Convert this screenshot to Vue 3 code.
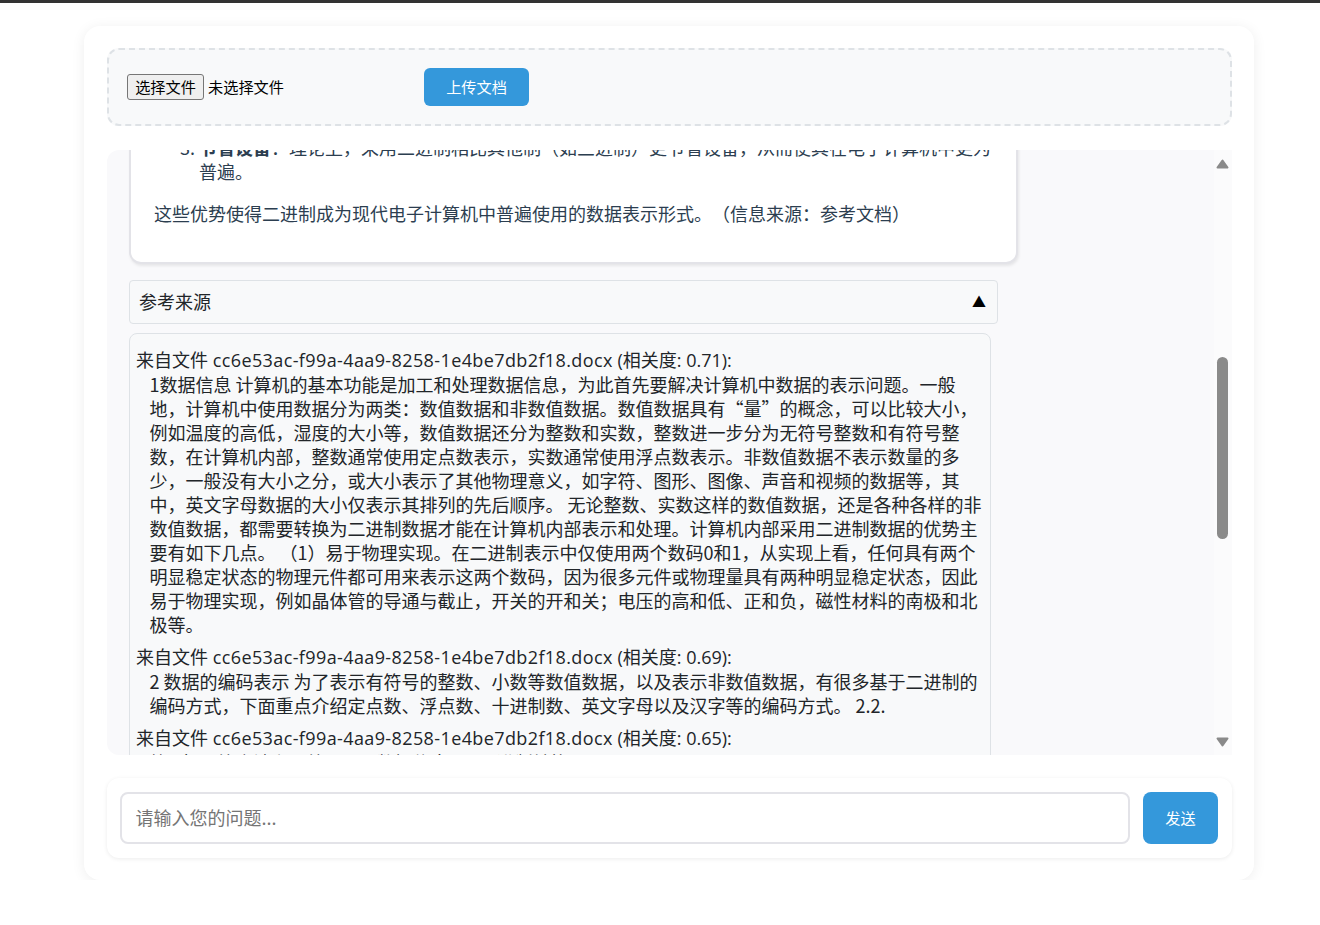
<template>
  <div class="top-bar"></div>
  <div class="page">
    <div class="container">
      <section class="upload-box">
        <div class="file-input">
          <button class="file-btn" type="button">选择文件</button>
          <span class="file-name">未选择文件</span>
        </div>
        <button class="upload-btn" type="button">上传文档</button>
      </section>

      <section class="chat-box">
        <div class="messages">
          <div class="answer">
            <ol start="3">
              <li><strong>节省设备</strong>：理论上，采用二进制相比其他制（如三进制）更节省设备，从而使其在电子计算机中更为普遍。</li>
            </ol>
            <p>这些优势使得二进制成为现代电子计算机中普遍使用的数据表示形式。（信息来源：参考文档）</p>
          </div>

          <div class="sources-toggle">
            <span>参考来源</span>
            <span class="caret">▲</span>
          </div>

          <div class="sources">
            <div v-for="(s, i) in sources" :key="i" class="source">
              <div class="source-title">来自文件 <span class="file-id">{{ s.file }}</span> (相关度: {{ s.score }}):</div>
              <div class="source-body">{{ s.text }}</div>
            </div>
          </div>
        </div>

        <div class="scrollbar">
          <svg class="arrow up" width="13" height="10" viewBox="0 0 13 10">
            <path d="M6.5 1.5 L11.5 8.5 H1.5 Z" fill="#8a8a8a" stroke="#8a8a8a" stroke-width="2" stroke-linejoin="round" />
          </svg>
          <div class="track"><div class="thumb"></div></div>
          <svg class="arrow down" width="13" height="10" viewBox="0 0 13 10">
            <path d="M1.5 1.5 H11.5 L6.5 8.5 Z" fill="#8a8a8a" stroke="#8a8a8a" stroke-width="2" stroke-linejoin="round" />
          </svg>
        </div>
      </section>

      <section class="input-box">
        <input class="question" type="text" placeholder="请输入您的问题..." />
        <button class="send-btn" type="button">发送</button>
      </section>
    </div>
  </div>
</template>

<script setup>
const file = 'cc6e53ac-f99a-4aa9-8258-1e4be7db2f18.docx'

const sources = [
  {
    file,
    score: '0.71',
    text: '1数据信息 计算机的基本功能是加工和处理数据信息，为此首先要解决计算机中数据的表示问题。一般地，计算机中使用数据分为两类：数值数据和非数值数据。数值数据具有“量”的概念，可以比较大小，例如温度的高低，湿度的大小等，数值数据还分为整数和实数，整数进一步分为无符号整数和有符号整数，在计算机内部，整数通常使用定点数表示，实数通常使用浮点数表示。非数值数据不表示数量的多少，一般没有大小之分，或大小表示了其他物理意义，如字符、图形、图像、声音和视频的数据等，其中，英文字母数据的大小仅表示其排列的先后顺序。 无论整数、实数这样的数值数据，还是各种各样的非数值数据，都需要转换为二进制数据才能在计算机内部表示和处理。计算机内部采用二进制数据的优势主要有如下几点。 （1）易于物理实现。在二进制表示中仅使用两个数码0和1，从实现上看，任何具有两个明显稳定状态的物理元件都可用来表示这两个数码，因为很多元件或物理量具有两种明显稳定状态，因此易于物理实现，例如晶体管的导通与截止，开关的开和关；电压的高和低、正和负，磁性材料的南极和北极等。'
  },
  {
    file,
    score: '0.69',
    text: '2 数据的编码表示 为了表示有符号的整数、小数等数值数据，以及表示非数值数据，有很多基于二进制的编码方式，下面重点介绍定点数、浮点数、十进制数、英文字母以及汉字等的编码方式。 2.2.'
  },
  {
    file,
    score: '0.65',
    text: '第2章 运算方法和运算器 2.1 数据信息 2.1.1 进制转换 2.2.1'
  }
]
</script>

<style>
body {
  background: #fff;
}
</style>

<style scoped>
.top-bar {
  height: 3px;
  background: #333;
}

.page {
  width: 1170px;
  margin: 23px 0 0 84px;
  font-family: "Noto Sans CJK SC", "Noto Sans", sans-serif;
  text-spacing-trim: space-all;
}

.container {
  background: #fff;
  border-radius: 16px;
  box-shadow: 0 2px 14px rgba(0, 0, 0, 0.07);
  padding: 22px 22px 22px 23px;
  height: 854px;
  box-sizing: border-box;
}

.upload-box {
  display: flex;
  align-items: center;
  gap: 20px;
  height: 78px;
  box-sizing: border-box;
  padding: 0 18px;
  background: #f8f9fa;
  border: 2px dashed #dee2e6;
  border-radius: 12px;
}

.file-input {
  display: flex;
  align-items: center;
  gap: 4px;
  width: 277px;
  font-size: 15.2px;
  color: #000;
}

.file-btn {
  width: 77px;
  height: 26px;
  padding: 0 0 2px;
  font: inherit;
  color: #000;
  background: #efefef;
  border: 1px solid #767676;
  border-radius: 3px;
}

.file-name {
  margin-bottom: 2px;
}

.upload-btn {
  width: 105px;
  height: 38px;
  padding: 0 0 2px;
  font: inherit;
  font-size: 15.2px;
  color: #fff;
  background: #3498db;
  border: none;
  border-radius: 6px;
}

.chat-box {
  display: flex;
  height: 605px;
  margin-top: 24px;
  background: #f9f9fb;
  border-radius: 12px 0 0 12px;
  overflow: hidden;
}

.messages {
  flex: 1;
  min-width: 0;
  overflow: hidden;
  padding-left: 22px;
}

.answer {
  width: 889px;
  box-sizing: border-box;
  margin-top: -15px;
  padding: 0 22px 13px 23px;
  background: #fff;
  border: 2px solid #e3e3e8;
  border-top: none;
  border-radius: 0 0 12px 12px;
  box-shadow: 1px 2px 3px rgba(0, 0, 0, 0.08);
  font-size: 18px;
  line-height: 24px;
  color: #2c3e50;
}

.answer ol {
  margin: 0;
  padding-left: 45px;
}

.answer p {
  margin: 18px 0 24px;
}

.sources-toggle {
  display: flex;
  justify-content: space-between;
  align-items: center;
  width: 869px;
  height: 44px;
  box-sizing: border-box;
  margin-top: 16px;
  padding: 0 11px 2px 9px;
  font-size: 18px;
  color: #212529;
  background: #f8f9fa;
  border: 1px solid #dee2e6;
  border-radius: 4px;
}

.caret {
  font-size: 14px;
  color: #000;
}

.sources {
  width: 862px;
  box-sizing: border-box;
  margin-top: 9px;
  padding: 14px 6px 0;
  font-size: 18px;
  line-height: 24px;
  color: #212529;
  background: #f8f9fa;
  border: 1px solid #dee2e6;
  border-radius: 8px;
}

.source {
  margin-bottom: 9px;
}

.source-title {
  font-family: "Open Sans", "Noto Sans CJK SC", sans-serif;
}

.file-id {
  letter-spacing: 0.39px;
}

.source-body {
  padding-left: 13.5px;
}

.scrollbar {
  display: flex;
  flex-direction: column;
  width: 18px;
  background: #fbfbfc;
}

.track {
  flex: 1;
  box-sizing: border-box;
  padding-top: 188px;
}

.thumb {
  width: 11px;
  height: 182px;
  margin-left: 3px;
  background: #8a8a8a;
  border-radius: 6px;
}

.arrow {
  display: block;
  flex: none;
  margin-left: 2px;
}

.arrow.up {
  margin-top: 9px;
}

.arrow.down {
  margin-bottom: 8px;
}

.input-box {
  display: flex;
  align-items: center;
  gap: 13px;
  height: 80px;
  box-sizing: border-box;
  margin-top: 23px;
  padding: 0 14px 0 13px;
  background: #fff;
  border-radius: 12px;
  box-shadow: 0 1px 4px rgba(0, 0, 0, 0.08);
}

.question {
  flex: 1;
  height: 52px;
  box-sizing: border-box;
  padding: 0 14px 3px 13.5px;
  font: inherit;
  font-size: 18px;
  background: #fff;
  border: 2px solid #e3e3e8;
  border-radius: 8px;
  outline: none;
}

.question::placeholder {
  color: #757575;
}

.send-btn {
  width: 75px;
  height: 52px;
  padding: 0 0 2px;
  font: inherit;
  font-size: 15.2px;
  color: #fff;
  background: #3498db;
  border: none;
  border-radius: 8px;
}
</style>
